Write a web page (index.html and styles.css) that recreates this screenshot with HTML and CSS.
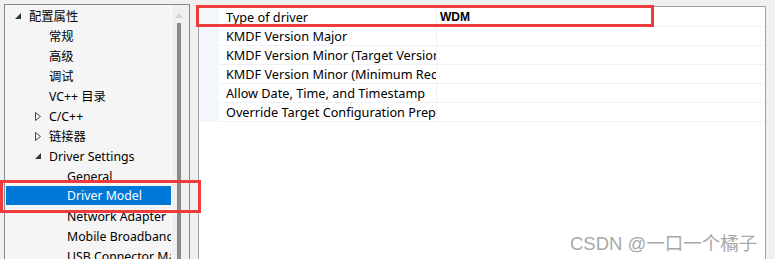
FILE: index.html
```html
<!DOCTYPE html>
<html>
<head>
<meta charset="utf-8">
<link rel="stylesheet" href="styles.css">
</head>
<body>
<div class="page">
  <div class="tree-panel">
    <div class="tree">
      <div class="node l0"><span class="arrow"><svg width="6" height="6" viewBox="0 0 6 6"><polygon points="6,0 6,6 0,6" fill="#333"/></svg></span><span class="label">配置属性</span></div>
      <div class="node l1"><span class="arrow"></span><span class="label">常规</span></div>
      <div class="node l1"><span class="arrow"></span><span class="label">高级</span></div>
      <div class="node l1"><span class="arrow"></span><span class="label">调试</span></div>
      <div class="node l1"><span class="arrow"></span><span class="label">VC++ 目录</span></div>
      <div class="node l1"><span class="arrow"><svg width="6" height="9" viewBox="0 0 6 9"><polygon points="0.5,0.5 5.5,4.5 0.5,8.5" fill="none" stroke="#444" stroke-width="1"/></svg></span><span class="label">C/C++</span></div>
      <div class="node l1"><span class="arrow"><svg width="6" height="9" viewBox="0 0 6 9"><polygon points="0.5,0.5 5.5,4.5 0.5,8.5" fill="none" stroke="#444" stroke-width="1"/></svg></span><span class="label">链接器</span></div>
      <div class="node l1"><span class="arrow"><svg width="6" height="6" viewBox="0 0 6 6"><polygon points="6,0 6,6 0,6" fill="#333"/></svg></span><span class="label">Driver Settings</span></div>
      <div class="node l2"><span class="label">General</span></div>
      <div class="node l2 selected"><span class="label">Driver Model</span></div>
      <div class="node l2"><span class="label">Network Adapter</span></div>
      <div class="node l2"><span class="label">Mobile Broadband</span></div>
      <div class="node l2"><span class="label">USB Connector Manager</span></div>
    </div>
    <div class="scrollbar">
      <svg class="up" width="8" height="5" viewBox="0 0 8 5"><polygon points="4,0 8,5 0,5" fill="#d4d4d4"/></svg>
      <div class="thumb"></div>
    </div>
  </div>
  <div class="grid-panel">
    <div class="grid">
      <div class="row"><div class="stripe"></div><div class="name">Type of driver</div><div class="value bold">WDM</div></div>
      <div class="row"><div class="stripe"></div><div class="name">KMDF Version Major</div><div class="value"></div></div>
      <div class="row"><div class="stripe"></div><div class="name">KMDF Version Minor (Target Version)</div><div class="value"></div></div>
      <div class="row"><div class="stripe"></div><div class="name">KMDF Version Minor (Minimum Required)</div><div class="value"></div></div>
      <div class="row"><div class="stripe"></div><div class="name">Allow Date, Time, and Timestamp</div><div class="value"></div></div>
      <div class="row"><div class="stripe"></div><div class="name">Override Target Configuration Preprocessor</div><div class="value"></div></div>
    </div>
  </div>
  <div class="mark mark-grid"></div>
  <div class="mark mark-tree"></div>
  <div class="watermark">CSDN @一口一个橘子</div>
</div>
</body>
</html>
```

FILE: styles.css
```css
html, body {
  margin: 0;
  padding: 0;
  background: #f0f0f0;
  overflow: hidden;
}
.page {
  position: relative;
  width: 775px;
  height: 259px;
  display: flex;
  align-items: flex-start;
  gap: 8px;
  padding-left: 4px;
  box-sizing: border-box;
  font-family: "Noto Sans", "Noto Sans CJK SC", sans-serif;
  font-size: 12px;
  color: #000;
}
.tree-panel {
  margin-top: 4px;
  width: 186px;
  height: 270px;
  box-sizing: border-box;
  border: 1px solid #828790;
  background: #f5f5f5;
  display: flex;
}
.tree {
  width: 167px;
  overflow: hidden;
  padding-top: 1px;
  display: flex;
  flex-direction: column;
}
.node {
  height: 20px;
  display: flex;
  align-items: center;
  white-space: nowrap;
  margin-left: 1px;
}
.node .arrow {
  width: 14px;
  display: flex;
  align-items: center;
  flex: none;
}
.l0 { padding-left: 9px; }
.l1 { padding-left: 29px; }
.l2 { padding-left: 61px; }
.node .label {
  font-size: 12.3px;
}
.selected {
  background: #0078d7;
  color: #fff;
  height: 19px;
  margin-bottom: 1px;
}
.scrollbar {
  position: relative;
  width: 17px;
  background: #f0f0f0;
  border-left: 1px solid #fafafa;
}
.scrollbar .up {
  position: absolute;
  left: 3px;
  top: 8px;
}
.scrollbar .thumb {
  position: absolute;
  left: 5px;
  top: 18px;
  width: 4px;
  height: 260px;
  background: #8a8a8a;
}
.grid-panel {
  margin-top: 6px;
  width: 568px;
  height: 253px;
  box-sizing: border-box;
  border: 1px solid #a0a0a0;
  border-bottom: none;
  background: #fff;
  padding-top: 1px;
}
.grid {
  display: flex;
  flex-direction: column;
}
.row {
  display: flex;
  height: 19px;
}
.stripe {
  width: 20px;
  background: #f3f6fb;
  flex: none;
}
.name {
  width: 210px;
  padding-left: 7px;
  border-right: 1px solid #eef1f6;
  border-bottom: 1px solid #eef1f6;
  white-space: nowrap;
  overflow: hidden;
  line-height: 18px;
  font-size: 12.7px;
  flex: none;
}
.value {
  flex: 1;
  padding-left: 3px;
  border-bottom: 1px solid #eef1f6;
  line-height: 18px;
}
.bold {
  font-weight: bold;
  font-family: "Liberation Sans", sans-serif;
}
.mark {
  position: absolute;
  border: 3px solid #ef3b3b;
  box-sizing: border-box;
}
.mark-grid {
  left: 196px;
  top: 5px;
  width: 458px;
  height: 22px;
}
.mark-tree {
  left: 0;
  top: 180px;
  width: 201px;
  height: 33px;
}
.watermark {
  position: absolute;
  left: 570px;
  top: 229px;
  font-family: "Liberation Sans", "Noto Sans CJK SC", sans-serif;
  font-size: 18.5px;
  color: #a8a8a8;
  white-space: nowrap;
}
```
